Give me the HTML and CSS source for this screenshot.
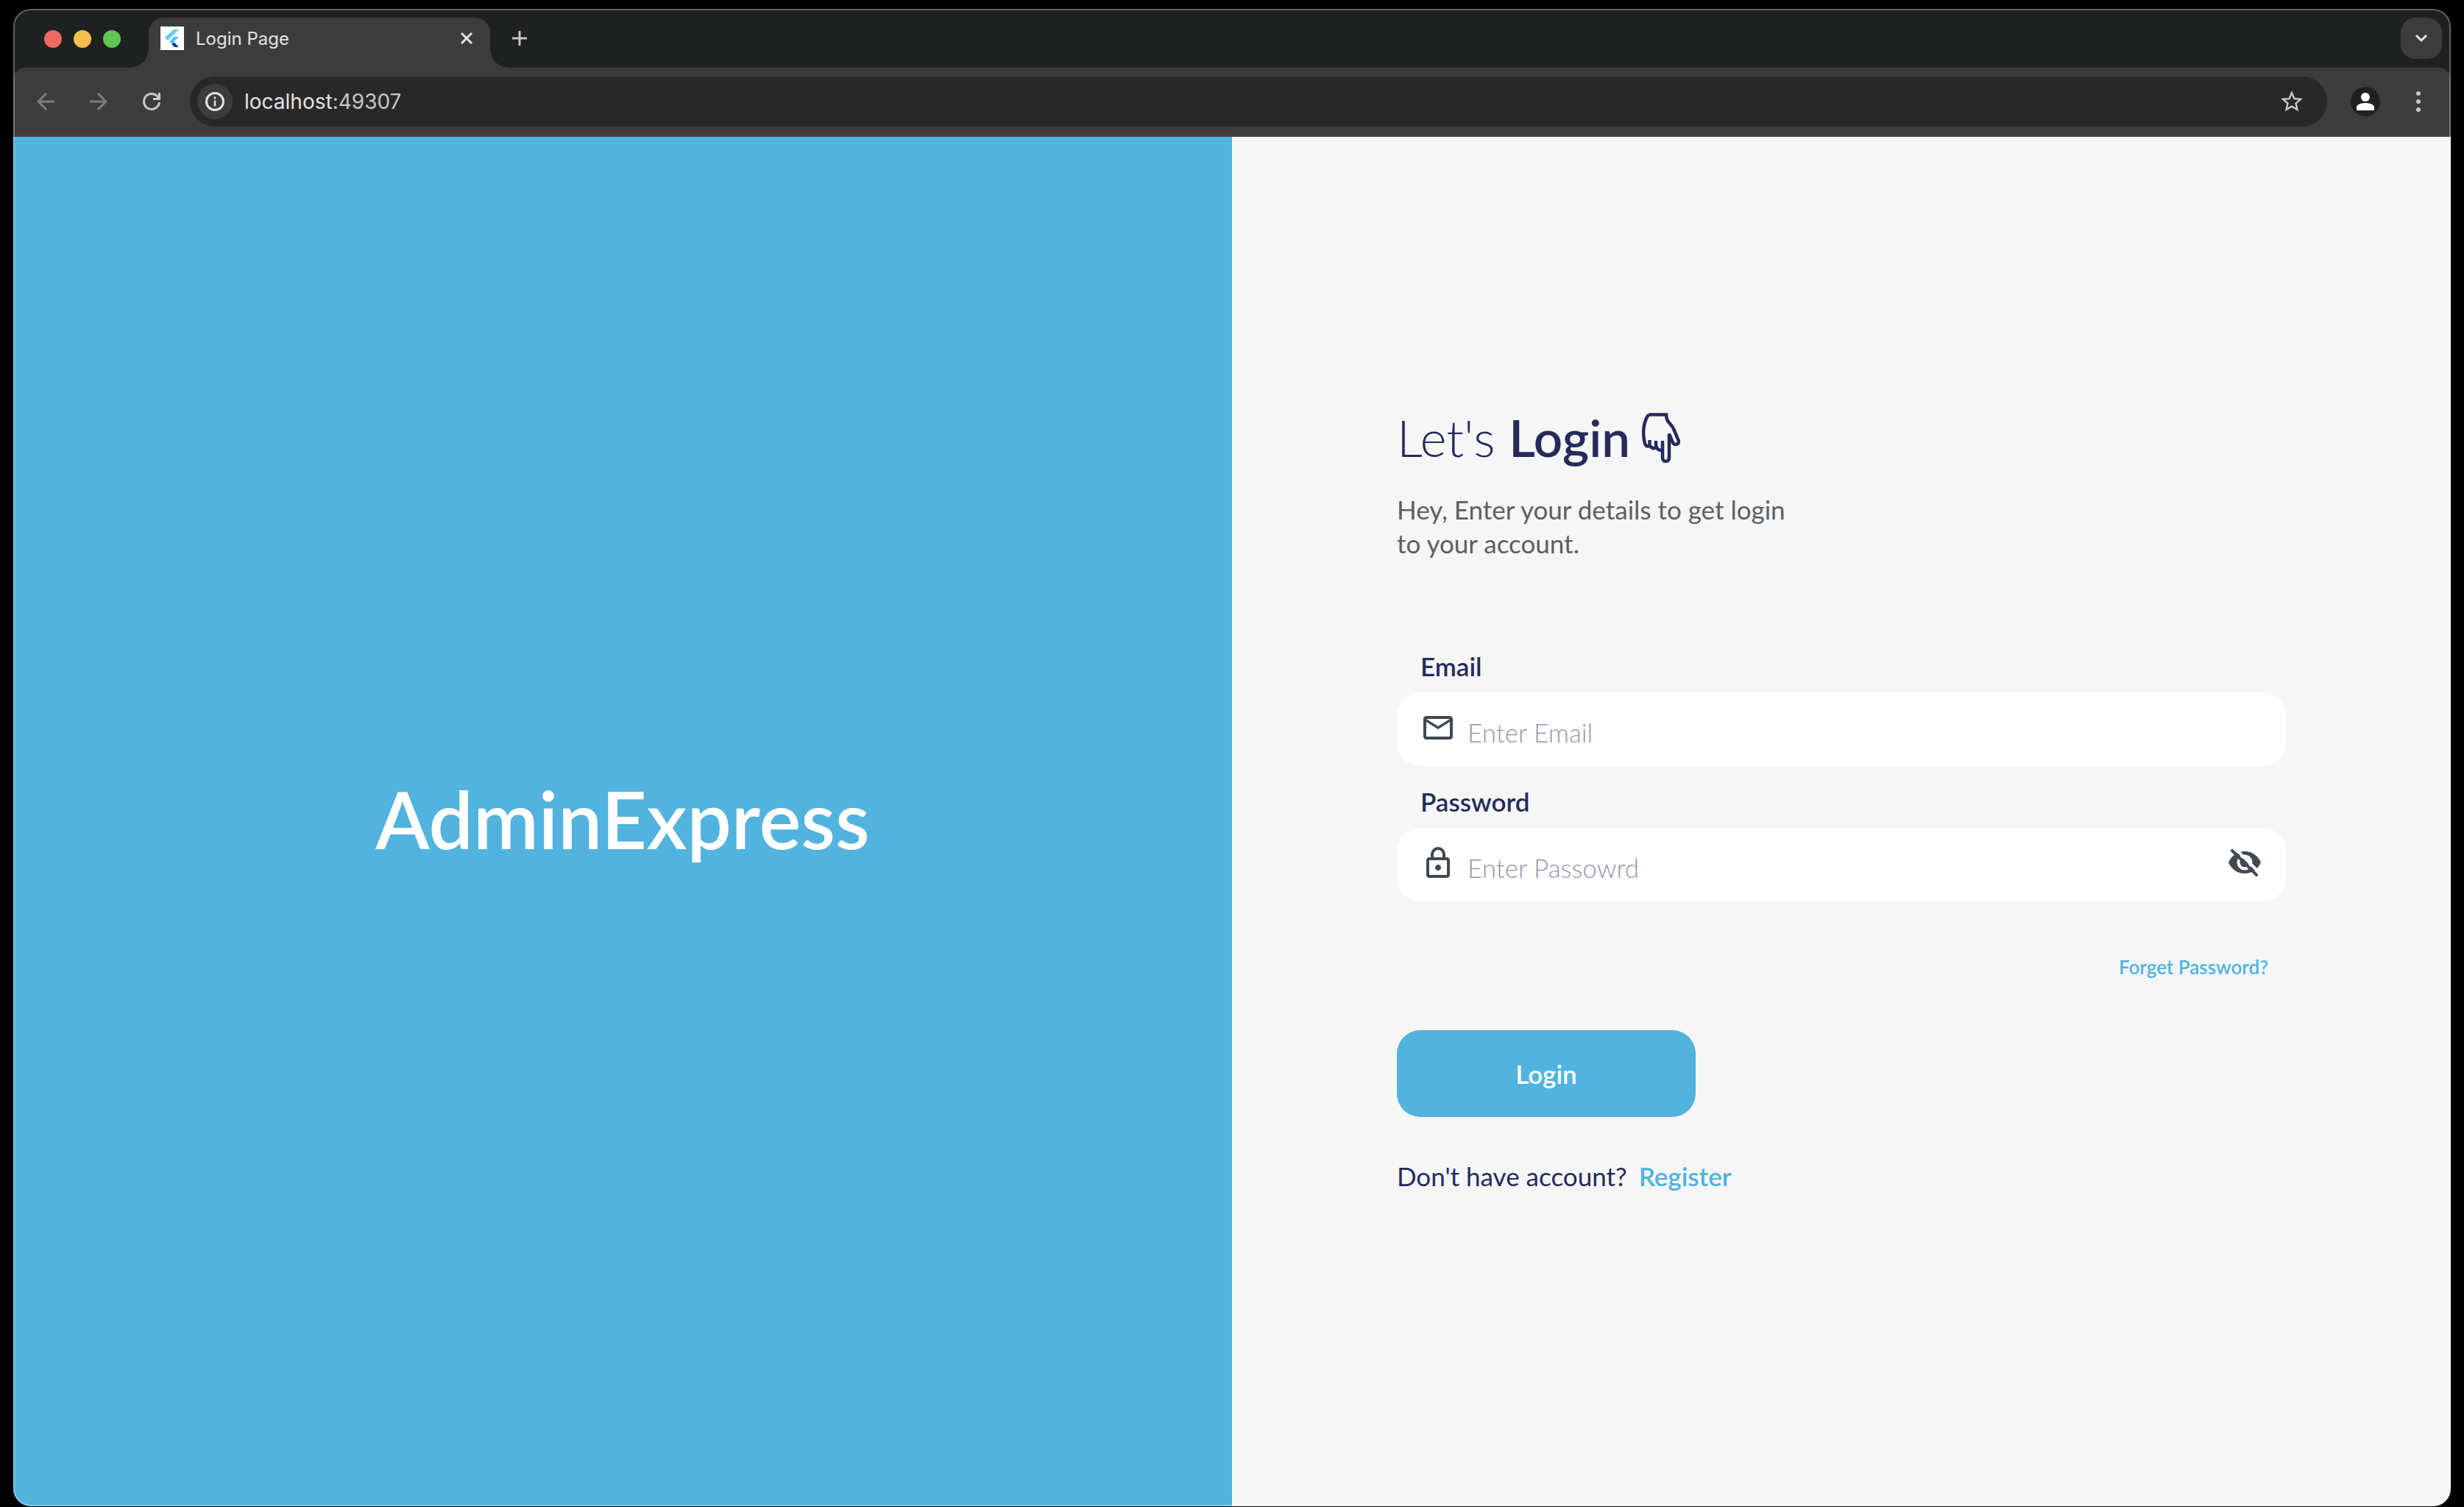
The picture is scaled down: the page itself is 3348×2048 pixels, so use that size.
FILE: index.html
```html
<!DOCTYPE html>
<html lang="en">
<head>
<meta charset="utf-8">
<title>Login Page</title>
<link rel="stylesheet" href="styles.css">
</head>
<body>
<div class="window">
  <header class="tabstrip">
    <div class="lights"><span class="light red"></span><span class="light yellow"></span><span class="light green"></span></div>
    <div class="tab">
      <svg class="favicon" viewBox="0 0 32 32"><rect width="32" height="32" fill="#fff"/><path d="M18 4h7L10 19l-4-4z" fill="#6fc7f7"/><path d="M18 14h7l-7 7 4 4h-4l-6-4z" fill="#54c5f8"/><path d="M15 24l4-2 6 6h-6z" fill="#01379c"/></svg>
      <span class="tab-title">Login Page</span>
      <button class="plain" aria-label="Close tab"><svg width="20" height="20" viewBox="0 0 20 20" fill="none" stroke="#e3e3e3" stroke-width="3"><path d="M3 3l14 14M17 3L3 17"/></svg></button>
    </div>
    <button class="plain new-tab" aria-label="New tab"><svg width="20" height="20" viewBox="0 0 20 20" fill="none" stroke="#c7c7c7" stroke-width="3"><path d="M0 10h20M10 0v20"/></svg></button>
    <button class="tab-search" aria-label="Search tabs"><svg width="20" height="14" viewBox="0 0 20 14" fill="none" stroke="#e3e3e3" stroke-width="3"><path d="M3 3l7 7 7-7"/></svg></button>
  </header>
  <nav class="toolbar">
    <button class="plain" aria-label="Back"><svg width="24" height="24" viewBox="0 0 24 24" fill="none" stroke="#7e7e7e" stroke-width="3"><path d="M24 12H2M13 1L2 12l11 11"/></svg></button>
    <button class="plain" aria-label="Forward"><svg width="24" height="24" viewBox="0 0 24 24" fill="none" stroke="#7e7e7e" stroke-width="3"><path d="M0 12h22M11 1l11 11-11 11"/></svg></button>
    <button class="plain" aria-label="Reload"><svg width="24" height="24" viewBox="0 0 24 24" fill="none" stroke="#c7c7c7" stroke-width="3"><path d="M22.500 13A10.500 10.500 0 1 1 19.500 4.500L22 8"/><path d="M22.500 0v8.500H14"/></svg></button>
    <div class="omnibox">
      <button class="site-info" aria-label="Site information"><svg width="28" height="28" viewBox="0 0 28 28" fill="none" stroke="#e3e3e3" stroke-width="3"><circle cx="14" cy="14" r="11.500"/><path d="M14 12.500v8M14 7.500v3" stroke-width="2.500"/></svg></button>
      <span class="url">localhost<span class="port">:49307</span></span>
      <button class="plain" aria-label="Bookmark"><svg width="36" height="36" viewBox="0 0 24 24" fill="#c7c7c7"><path d="M22 9.240l-7.190-.620L12 2 9.190 8.630 2 9.240l5.460 4.730L5.820 21 12 17.270 18.180 21l-1.630-7.030zM12 15.400l-3.760 2.270 1-4.280-3.320-2.880 4.380-.380L12 6.100l1.710 4.040 4.380.380-3.320 2.880 1 4.280z"/></svg></button>
    </div>
    <button class="plain" aria-label="Profile"><svg width="40" height="40" viewBox="0 0 40 40"><circle cx="20" cy="20" r="20" fill="#1f2120"/><circle cx="20" cy="14" r="6" fill="#fff"/><path d="M8 32v-4c0-4 6-6 12-6s12 2 12 6v4z" fill="#fff"/></svg></button>
    <button class="plain" aria-label="Menu"><svg width="8" height="28" viewBox="0 0 8 28" fill="#c7c7c7"><circle cx="4" cy="3" r="3"/><circle cx="4" cy="14" r="3"/><circle cx="4" cy="25" r="3"/></svg></button>
  </nav>
  <main class="page">
    <section class="brand"><span class="brand-name">AdminExpress</span></section>
    <section class="panel">
      <form class="form">
        <h1 class="title"><span>Let's <b>Login</b></span><svg width="52" height="68" viewBox="0 0 52 68" fill="none" stroke="#262b5b" stroke-width="4.500"><path d="M9 2.500h24c0 5 1 8 4 11 4 4 6 7 8 13l5 12c0 5-6 6-8 2l-5-12v33c0 6-9 6-9 0V38M28 49c-3 3-6 2-8-2-4 2-7 1-9-2-5 2-7-1-8-8C1 24 3 11 9 2.500M10.500 37v8M19 38v9"/></svg></h1>
        <p class="subtitle">Hey, Enter your details to get login<br>to your account.</p>
        <label class="label" for="email">Email</label>
        <div class="field">
          <svg width="48" height="48" viewBox="0 0 24 24" fill="#42484f"><path d="M4 20q-.825 0-1.412-.587T2 18V6q0-.825.588-1.412T4 4h16q.825 0 1.413.588T22 6v12q0 .825-.587 1.413T20 20zm8-7L4 8v10h16V8zm0-2l8-5H4zM4 8V6v12z"/></svg>
          <input class="input" id="email" type="email" placeholder="Enter Email">
        </div>
        <label class="label" for="password">Password</label>
        <div class="field">
          <svg width="48" height="48" viewBox="0 0 24 24" fill="#42484f"><path d="M6 22q-.825 0-1.412-.587T4 20V10q0-.825.588-1.412T6 8h1V6q0-2.075 1.463-3.537T12 1t3.538 1.463T17 6v2h1q.825 0 1.413.588T20 10v10q0 .825-.587 1.413T18 22zm0-2h12V10H6zm6-3q.825 0 1.413-.587T14 15t-.587-1.412T12 13t-1.412.588T10 15t.588 1.413T12 17M9 8h6V6q0-1.250-.875-2.125T12 3t-2.125.875T9 6z"/></svg>
          <input class="input" id="password" type="password" placeholder="Enter Passowrd">
          <button class="plain" type="button" aria-label="Show password"><svg width="44" height="38" viewBox="0 0 44 38"><path d="M0 18C4 9 12 3 22 3s18 6 22 15c-4 9-12 15-22 15S4 27 0 18z" fill="#42484f"/><circle cx="22" cy="18" r="8.500" fill="none" stroke="#fff" stroke-width="4"/><path d="M8-2l34 34" stroke="#fff" stroke-width="4"/><path d="M5 2l33 33" stroke="#42484f" stroke-width="4" stroke-linecap="round"/></svg></button>
        </div>
        <a class="forget" href="#">Forget Password?</a>
        <button class="submit" type="submit">Login</button>
        <p class="register"><span>Don't have account?</span><a class="register-link" href="#">Register</a></p>
      </form>
    </section>
  </main>
</div>
</body>
</html>
```
FILE: styles.css
```css
* { box-sizing: border-box; }
html { height: 100%; background: #000; }
body { margin: 0; height: 100%; padding: 12px 18px 1px; font-family: Lato, "Liberation Sans", sans-serif; }
button { border: 0; padding: 0; font: inherit; cursor: pointer; }
svg { display: block; flex: none; }
a { text-decoration: none; }
.plain { background: none; flex: none; }
.window { position: relative; display: flex; flex-direction: column; min-height: 100%; border-radius: 24px; overflow: hidden; background: #1f2120; }
.window::after { content: ""; position: absolute; inset: 0; border: 2px solid rgba(255, 255, 255, .3); border-radius: 24px; pointer-events: none; }
.tabstrip { display: flex; height: 80px; padding: 12px 12px 0 42px; font-family: Inter, sans-serif; }
.lights { display: flex; gap: 16px; padding-top: 17px; }
.light { width: 24px; height: 24px; border-radius: 50%; }
.red { background: #ed6a5e; }
.yellow { background: #f5bf4f; }
.green { background: #61c554; }
.tab { position: relative; display: flex; align-items: center; width: 464px; height: 68px; margin-left: 38px; padding: 0 22px 12px 16px; border-radius: 20px 20px 0 0; background: #3c3c3c; }
.tab::before, .tab::after { content: ""; position: absolute; bottom: 0; width: 24px; height: 24px; }
.tab::before { right: 100%; background: radial-gradient(circle at 0 0, transparent 23px, #3c3c3c 24px); }
.tab::after { left: 100%; background: radial-gradient(circle at 100% 0, transparent 23px, #3c3c3c 24px); }
.favicon { width: 32px; height: 32px; }
.tab-title { flex: 1; margin-left: 16px; font-size: 24px; color: #e3e3e3; }
.new-tab { height: 56px; margin-left: 30px; }
.tab-search { display: grid; place-items: center; width: 56px; height: 56px; margin-left: auto; border-radius: 20px; background: #3c3c3c; }
.toolbar { display: flex; align-items: center; height: 94px; padding: 0 40px 0 32px; border-radius: 16px 16px 0 0; background: #3c3c3c; border-bottom: 2px solid #474747; gap: 48px; }
.omnibox { flex: 1; display: flex; align-items: center; height: 68px; margin: 0 -16px 0 -8px; padding: 0 30px 0 10px; border-radius: 34px; background: #282828; font-family: Inter, sans-serif; }
.site-info { display: grid; place-items: center; width: 48px; height: 48px; border-radius: 50%; background: #3c3c3c; }
.url { flex: 1; margin-left: 16px; font-size: 28px; color: #e3e3e3; }
.port { color: #c7c7c7; }
.page { flex: 1; display: grid; grid-template-columns: 1fr 1fr; }
.brand { display: grid; place-items: center; padding-bottom: 8px; background: #51b3de; color: #fff; }
.brand-name { font-size: 107px; font-weight: 600; line-height: 112px; }
.panel { display: flex; flex-direction: column; justify-content: center; padding: 0 224px 58px; background: #f6f6f6; }
.form { display: flex; flex-direction: column; font-size: 35px; color: #262b5b; }
.title { display: flex; align-items: center; gap: 16px; margin: 0; font-size: 69px; line-height: 76px; font-weight: 300; }
.title b { font-weight: 600; }
.subtitle { margin: 36px 0 0; line-height: 46px; color: #5a5f63; font-weight: 400; }
.label { margin: 26px 0 14px 32px; line-height: 44px; font-weight: 600; }
.subtitle + .label { margin-top: 122px; }
.field { display: flex; align-items: center; height: 100px; padding: 0 34px 4px 32px; border-radius: 32px; background: #fff; }
.input { flex: 1; min-width: 0; height: 64px; margin-left: 16px; padding: 12px 0 0; border: 0; outline: 0; background: none; font: inherit; font-weight: 300; color: #262b5b; }
.input::placeholder { color: #9295ad; opacity: 1; }
.forget { align-self: flex-end; margin: 72px 24px 0 0; font-size: 26px; line-height: 34px; font-weight: 600; color: #51b3de; }
.submit { align-self: flex-start; width: 406px; height: 118px; margin-top: 69px; border-radius: 32px; background: #51b3de; color: #fff; font-weight: 600; }
.register { display: flex; gap: 16px; margin: 60px 0 0; line-height: 40px; }
.register-link { font-weight: 600; color: #51b3de; }
```
